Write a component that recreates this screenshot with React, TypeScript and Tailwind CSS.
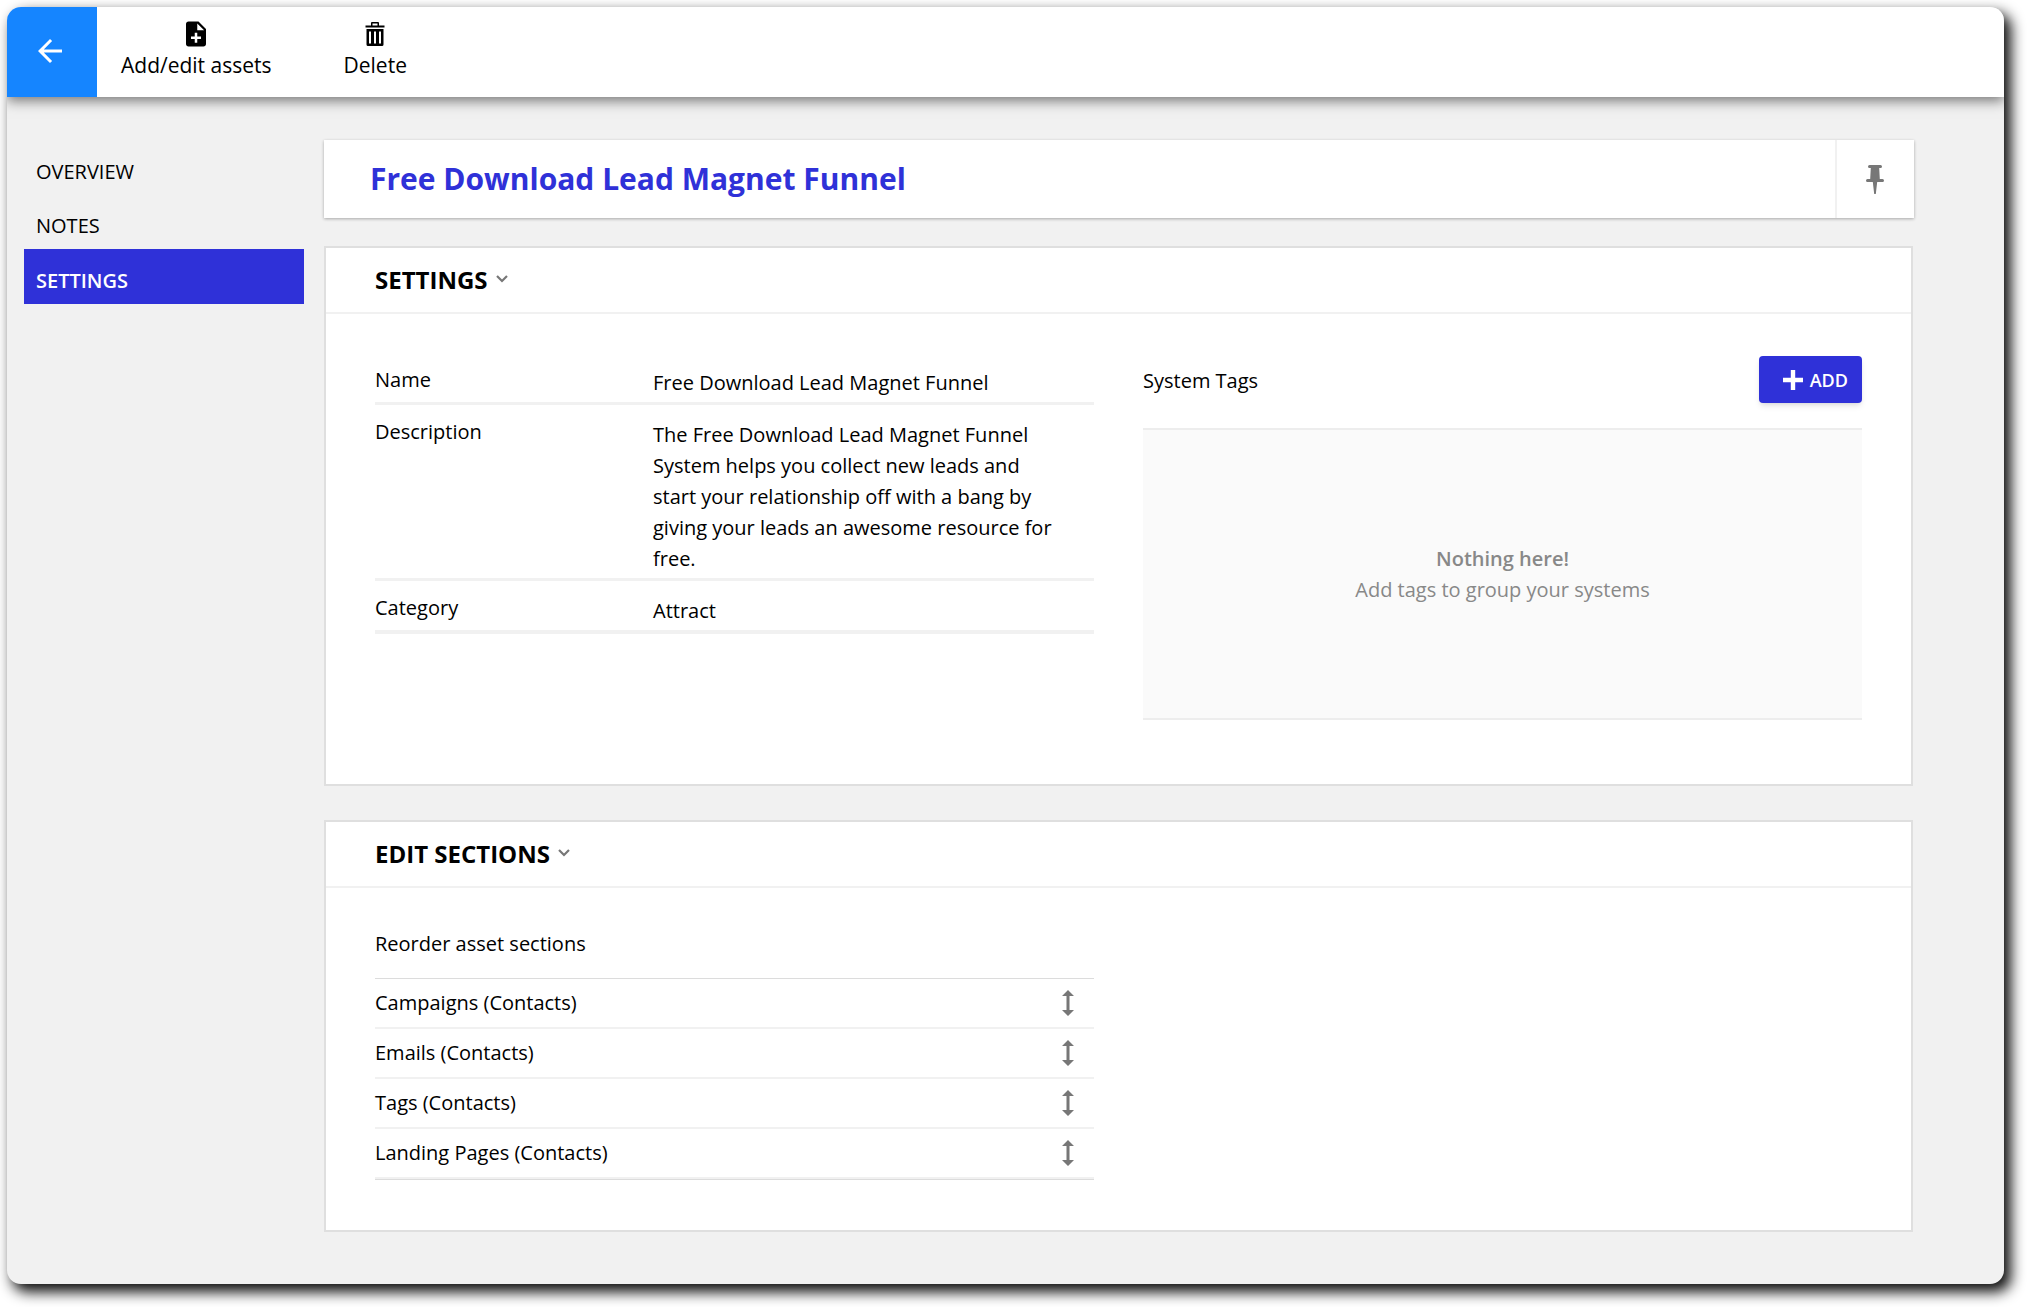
import type { ReactNode } from "react";
import { MdArrowBack, MdNoteAdd } from "react-icons/md";

const navItems = [
  { label: "OVERVIEW", active: false },
  { label: "NOTES", active: false },
  { label: "SETTINGS", active: true },
];

const details = [
  { label: "Name", value: "Free Download Lead Magnet Funnel" },
  {
    label: "Description",
    value:
      "The Free Download Lead Magnet Funnel System helps you collect new leads and start your relationship off with a bang by giving your leads an awesome resource for free.",
  },
  { label: "Category", value: "Attract" },
];

const assetSections = [
  "Campaigns (Contacts)",
  "Emails (Contacts)",
  "Tags (Contacts)",
  "Landing Pages (Contacts)",
];

function TrashIcon() {
  return (
    <svg width="20" height="24" viewBox="0 0 20 24" fill="currentColor">
      <path
        fillRule="evenodd"
        d="M6 3.500V1a1 1 0 0 1 1-1h6a1 1 0 0 1 1 1v2.500h5.500v2H.5v-2H6Zm1.500 0h5V1.500h-5v2ZM1.500 7h17v15.500a1.500 1.500 0 0 1-1.500 1.500H3a1.500 1.500 0 0 1-1.500-1.500V7Zm2.500 2.500v12h2v-12H4Zm5 0v12h2v-12H9Zm5 0v12h2v-12h-2Z"
      />
    </svg>
  );
}

function PinIcon() {
  return (
    <svg width="18" height="29" viewBox="0 0 18 29" fill="currentColor">
      <path d="M3.500 0h11a1.500 1.500 0 0 1 0 3h-1.300l.6 11H16.500a1.500 1.500 0 0 1 0 3h-5.300L9.800 29H8.200L6.800 17H1.500a1.500 1.500 0 0 1 0-3h2.700l.6-11H3.500a1.500 1.500 0 0 1 0-3Z" />
    </svg>
  );
}

function ChevronIcon() {
  return (
    <svg width="12" height="8" viewBox="0 0 12 8" fill="none" stroke="currentColor" strokeWidth="2.200">
      <path d="M1 1l5 5 5-5" />
    </svg>
  );
}

function PlusIcon() {
  return (
    <svg width="20" height="20" viewBox="0 0 20 20" fill="currentColor">
      <path d="M7.800 0h4.400v7.800H20v4.400h-7.800V20H7.800v-7.800H0V7.800h7.800z" />
    </svg>
  );
}

function MoveIcon() {
  return (
    <svg width="12" height="26" viewBox="0 0 12 26" fill="currentColor">
      <path d="M6 0l6 6H7.500v14H12l-6 6-6-6h4.500V6H0z" />
    </svg>
  );
}

function ToolbarButton({ icon, label }: { icon: ReactNode; label: string }) {
  return (
    <button type="button" className="flex flex-col items-center px-9 pt-3 text-[21px] leading-8">
      <span className="flex h-[30px] items-center">{icon}</span>
      {label}
    </button>
  );
}

function Card({ title, children }: { title: string; children: ReactNode }) {
  return (
    <section className="border-2 border-[#dfdfdf] bg-white">
      <div className="flex h-[66px] items-center border-b-2 border-[#f1f1f1] px-[49px]">
        <h2>
          <button type="button" className="flex items-center gap-2 text-2xl font-bold">
            {title}
            <span className="pb-[2px] text-[#777]">
              <ChevronIcon />
            </span>
          </button>
        </h2>
      </div>
      {children}
    </section>
  );
}

export default function App() {
  return (
    <div className="flex min-h-screen bg-white pt-[7px] pr-[23px] pb-[23px] pl-[7px] font-['Open_Sans',sans-serif] text-xl font-medium text-black">
      <div className="flex flex-1 flex-col overflow-hidden rounded-[14px] bg-[#f1f1f1] shadow-[6px_7px_14px_1px_rgba(0,0,0,0.95)]">
        <header className="relative flex h-[90px] bg-white shadow-[0_4px_12px_rgba(0,0,0,0.5)]">
          <button
            type="button"
            aria-label="Back"
            className="flex w-[90px] items-center justify-center bg-[#1585ff] pr-1 pb-[2px] text-white"
          >
            <MdArrowBack size={36} />
          </button>
          <div className="-ml-3 flex">
            <ToolbarButton icon={<MdNoteAdd size={30} />} label="Add/edit assets" />
            <ToolbarButton icon={<TrashIcon />} label="Delete" />
          </div>
        </header>

        <div className="flex flex-1 pt-[43px] pr-[90px] pb-[52px] pl-[17px]">
          <nav className="mr-5 w-[280px] shrink-0 pt-px">
            {navItems.map((item) => (
              <a
                key={item.label}
                href="#"
                className={
                  item.active
                    ? "flex h-[55px] items-center bg-[#2f31d8] px-3 pt-2 font-semibold text-white"
                    : "flex h-[54px] items-center px-3 pt-2"
                }
              >
                {item.label}
              </a>
            ))}
          </nav>

          <main className="min-w-0 flex-1">
            <div className="flex h-[78px] bg-white shadow-[0_1px_3px_rgba(0,0,0,0.3)]">
              <h1 className="flex flex-1 items-center px-[46px] text-[30px] font-bold text-[#2f31d8]">
                Free Download Lead Magnet Funnel
              </h1>
              <button
                type="button"
                aria-label="Pin"
                className="flex w-[79px] items-center justify-center border-l-2 border-[#f1f1f1] pr-[2px] text-[#777]"
              >
                <PinIcon />
              </button>
            </div>

            <div className="mt-7 mr-px flex flex-col gap-[34px]">
              <Card title="SETTINGS">
                <div className="grid grid-cols-2 gap-[49px] px-[49px] pt-[39px] pb-16">
                  <dl className="border-b border-[#f1f1f1] self-start leading-[31px]">
                    {details.map((row) => (
                      <div key={row.label} className="flex border-b-[3px] border-[#f1f1f1] pb-1">
                        <dt className="w-[278px] shrink-0 pt-[11px]">{row.label}</dt>
                        <dd className="flex-1 pt-[14px] pr-7">{row.value}</dd>
                      </div>
                    ))}
                  </dl>

                  <div>
                    <div className="flex items-center justify-between pt-[3px]">
                      <h3 className="pt-[2px]">System Tags</h3>
                      <button
                        type="button"
                        className="flex h-[47px] w-[103px] items-center justify-end gap-[7px] rounded bg-[#2f31d8] pr-[14px] text-lg font-semibold text-white shadow-md"
                      >
                        <PlusIcon />
                        ADD
                      </button>
                    </div>
                    <div className="mt-[25px] flex h-[292px] flex-col items-center justify-center border-y-2 border-[#ededed] bg-[#fafafa] leading-[31px] text-[#888]">
                      <strong className="font-semibold">Nothing here!</strong>
                      <p>Add tags to group your systems</p>
                    </div>
                  </div>
                </div>
              </Card>

              <Card title="EDIT SECTIONS">
                <div className="grid grid-cols-2 gap-[49px] px-[49px] pt-[41px] pb-[50px]">
                  <div>
                    <p className="pb-[19px] leading-[30px]">Reorder asset sections</p>
                    <ul className="border-y border-[#dcdcdc]">
                      {assetSections.map((name) => (
                        <li
                          key={name}
                          className="flex h-[50px] items-center justify-between border-b-2 border-[#f1f1f1] pr-5"
                        >
                          {name}
                          <button type="button" aria-label={`Move ${name}`} className="cursor-move text-[#777]">
                            <MoveIcon />
                          </button>
                        </li>
                      ))}
                    </ul>
                  </div>
                </div>
              </Card>
            </div>
          </main>
        </div>
      </div>
    </div>
  );
}
